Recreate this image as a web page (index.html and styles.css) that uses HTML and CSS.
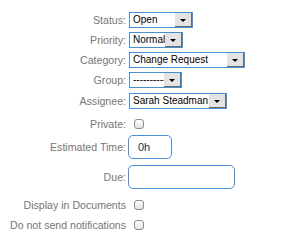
FILE: index.html
```html
<!DOCTYPE html>
<html lang="en">
  <head>
    <meta charset="utf-8">
    <meta name="viewport" content="width=device-width, initial-scale=1.0">
    <title>Issue properties</title>
    <link rel="stylesheet" href="styles.css">
  </head>
  <body>
    <!-- issue property form -->
    <form class="props">
      <div class="row row--select">
        <label class="row-label" for="status">Status:</label>
        <span class="select select--status">
          <select id="status"><option>Open</option></select>
        </span>
      </div>
      <div class="row row--select">
        <label class="row-label" for="priority">Priority:</label>
        <span class="select select--priority">
          <select id="priority"><option>Normal</option></select>
        </span>
      </div>
      <div class="row row--select">
        <label class="row-label" for="category">Category:</label>
        <span class="select select--category">
          <select id="category"><option>Change Request</option></select>
        </span>
      </div>
      <div class="row row--select">
        <label class="row-label" for="group">Group:</label>
        <span class="select select--group">
          <select id="group"><option>----------</option></select>
        </span>
      </div>
      <div class="row row--select row--assignee">
        <label class="row-label" for="assignee">Assignee:</label>
        <span class="select select--assignee">
          <select id="assignee"><option>Sarah Steadman</option></select>
        </span>
      </div>
      <div class="row row--private">
        <label class="row-label" for="private">Private:</label>
        <input class="check" type="checkbox" id="private">
      </div>
      <div class="row row--estimate">
        <label class="row-label" for="estimate">Estimated Time:</label>
        <input class="field field--short" type="text" id="estimate" value="0h">
      </div>
      <div class="row row--due">
        <label class="row-label" for="due">Due:</label>
        <input class="field field--date" type="text" id="due">
      </div>
      <div class="row row--check row--display">
        <label class="row-label" for="display">Display in Documents</label>
        <input class="check" type="checkbox" id="display">
      </div>
      <div class="row row--check row--notify">
        <label class="row-label" for="notify">Do not send notifications</label>
        <input class="check" type="checkbox" id="notify">
      </div>
    </form>
  </body>
</html>
```

FILE: styles.css
```css
* {
  box-sizing: border-box;
}
html, body {
  margin: 0;
  padding: 0;
  background: #fff;
  font-family: "Liberation Sans", Arial, sans-serif;
}

/* form layout: right aligned labels, controls at x=129 */
.props {
  margin: 0;
  padding-top: 12px;
  display: flex;
  flex-direction: column;
}
.row {
  display: flex;
  align-items: center;
  gap: 3px;
}
.row-label {
  width: 126px;
  flex: none;
  text-align: right;
  font-size: 10.6px;
  color: #767676;
  white-space: nowrap;
}

.row--select {
  height: 16px;
  margin-bottom: 4px;
}
.row--assignee {
  margin-top: 1px;
  margin-bottom: 0;
}
.row--private {
  height: 20px;
  margin-top: 5px;
}
.row--estimate {
  height: 24px;
  margin-top: 1px;
}
.row--due {
  height: 24px;
  margin-top: 6px;
}
.row--display {
  height: 14px;
  margin-top: 9px;
}
.row--notify {
  height: 14px;
  margin-top: 6px;
}

/* dropdowns */
.select {
  position: relative;
  display: block;
  height: 16px;
  border: 1px solid #4a8ed6;
  background: #fff;
}
.select select {
  appearance: none;
  -webkit-appearance: none;
  display: block;
  width: 100%;
  height: 14px;
  margin: 0;
  padding: 0 0 0 3px;
  border: 0;
  background: transparent;
  font-family: inherit;
  font-size: 10px;
  line-height: 14px;
  color: #000;
  outline: none;
}
/* arrow button */
.select::before {
  content: "";
  position: absolute;
  top: 0;
  right: 0;
  bottom: 0;
  width: 16px;
  background: #e3e3e3;
  border-right: 1px solid #6a6a6a;
  border-bottom: 1px solid #6a6a6a;
  pointer-events: none;
}
.select::after {
  content: "";
  position: absolute;
  top: 6px;
  right: 6px;
  border-left: 3px solid transparent;
  border-right: 3px solid transparent;
  border-top: 3px solid #000;
  pointer-events: none;
}
.select--status { width: 64px; }
.select--priority { width: 54px; }
.select--category { width: 116px; }
.select--group { width: 53px; }
.select--assignee { width: 98px; }

/* checkboxes */
.check {
  appearance: none;
  -webkit-appearance: none;
  width: 10px;
  height: 10px;
  margin: 0 0 0 5px;
  border: 1px solid #8c8c8c;
  border-radius: 3px;
  background: linear-gradient(#ffffff, #e2e2e2);
}

/* text inputs */
.field {
  height: 24px;
  margin-left: -1px;
  padding: 0 0 0 9px;
  border: 1px solid #4a8ed6;
  border-radius: 5px;
  font-family: inherit;
  font-size: 11px;
  color: #2e2a24;
  outline: none;
}
.field--short { width: 44px; }
.field--date { width: 107px; }
```
